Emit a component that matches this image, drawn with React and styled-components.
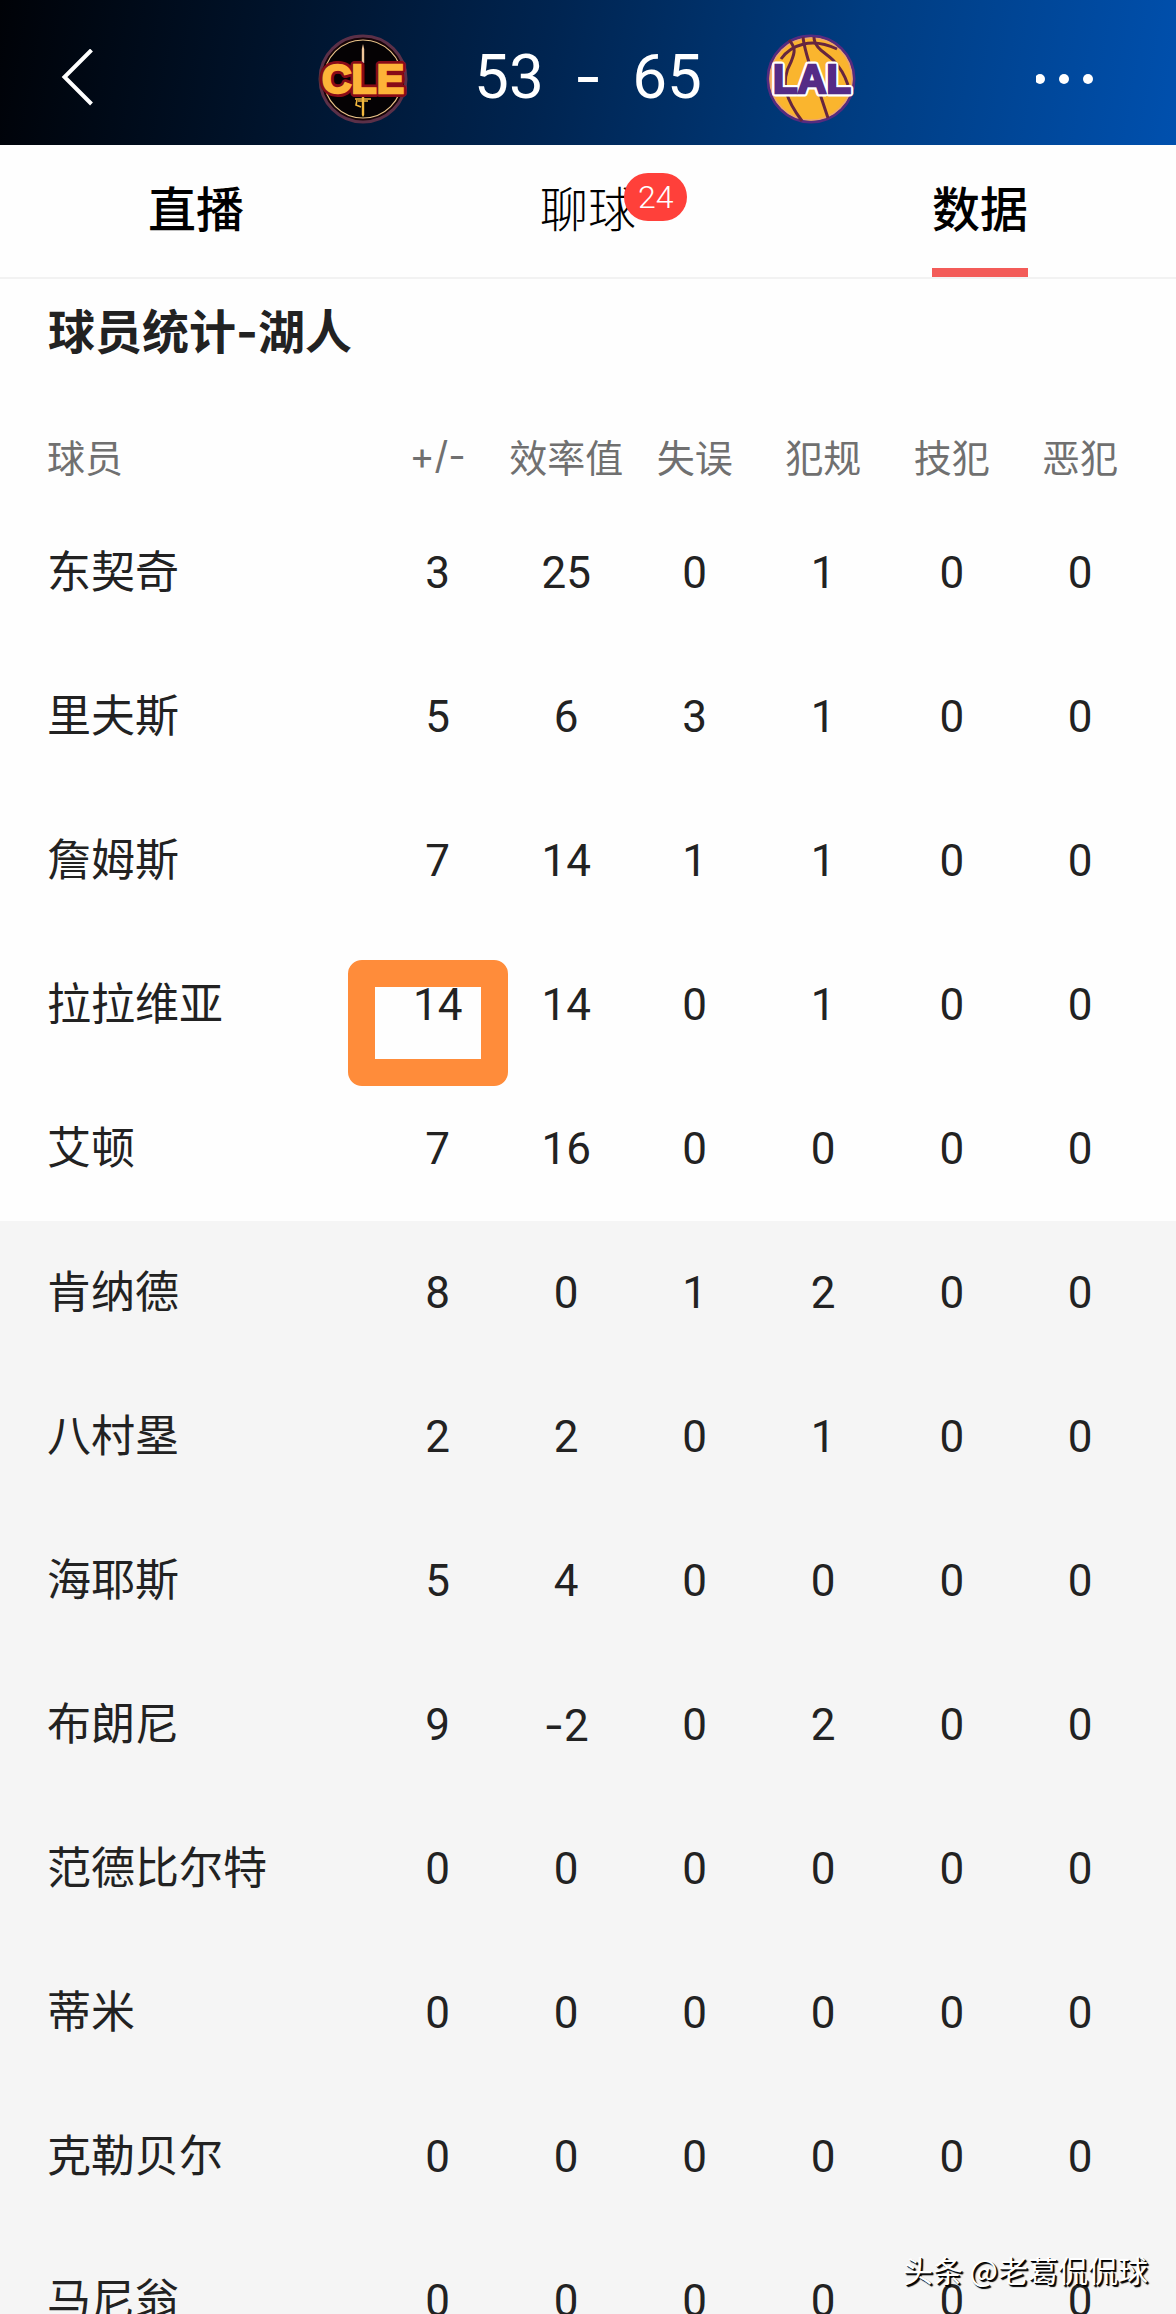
import React, { useState } from "react";
import styled, { createGlobalStyle } from "styled-components";

const columns = ["+/-", "效率值", "失误", "犯规", "技犯", "恶犯"]

const players = [
    { name: "东契奇", starter: true, stats: [3, 25, 0, 1, 0, 0] },
    { name: "里夫斯", starter: true, stats: [5, 6, 3, 1, 0, 0] },
    { name: "詹姆斯", starter: true, stats: [7, 14, 1, 1, 0, 0] },
    { name: "拉拉维亚", starter: true, stats: [14, 14, 0, 1, 0, 0], marked: 0 },
    { name: "艾顿", starter: true, stats: [7, 16, 0, 0, 0, 0] },
    { name: "肯纳德", starter: false, stats: [8, 0, 1, 2, 0, 0] },
    { name: "八村塁", starter: false, stats: [2, 2, 0, 1, 0, 0] },
    { name: "海耶斯", starter: false, stats: [5, 4, 0, 0, 0, 0] },
    { name: "布朗尼", starter: false, stats: [9, -2, 0, 2, 0, 0] },
    { name: "范德比尔特", starter: false, stats: [0, 0, 0, 0, 0, 0] },
    { name: "蒂米", starter: false, stats: [0, 0, 0, 0, 0, 0] },
    { name: "克勒贝尔", starter: false, stats: [0, 0, 0, 0, 0, 0] },
    { name: "马尼翁", starter: false, stats: [0, 0, 0, 0, 0, 0] }
]

const tabs = [
    { label: "直播", weight: 500 },
    { label: "聊球", weight: 300, count: 24 },
    { label: "数据", weight: 500 }
]

const GlobalStyle = createGlobalStyle`
    * {
        box-sizing: border-box;
    }

    body {
        margin: 0;
        background: #fefefe;
        color: #222;
        font-family: Roboto, "Noto Sans CJK SC", sans-serif;
    }

    button {
        border: 0;
        padding: 0;
        background: none;
        font: inherit;
        color: inherit;
        cursor: pointer;
    }
`

const Screen = styled.div`
    position: relative;
    height: 100vh;
    overflow: hidden;
`

const Header = styled.header`
    display: grid;
    grid-template-columns: 1fr auto 1fr;
    align-items: center;
    height: 145px;
    padding: 12px 56px 0;
    background: linear-gradient(100deg, #000207 0%, #001229 22%, #002450 46%, #003c80 72%, #0050ae 100%);
    color: #fff;
`

const IconButton = styled.button`
    display: flex;
    justify-self: ${props => props.$end ? "end" : "start"};
`

const Scoreboard = styled.div`
    display: flex;
    align-items: center;
    gap: 64px;

    svg {
        display: block;
    }
`

const Score = styled.div`
    display: flex;
    align-items: center;
    gap: 30px;
    font-size: 62px;
    font-weight: 400;
    line-height: 80px;
    padding-bottom: 4px;
`

const Sign = styled.span`
    font-family: Inter, "Noto Sans CJK SC", sans-serif;
`

const Tabs = styled.nav`
    display: grid;
    grid-template-columns: repeat(3, 1fr);
    justify-items: center;
    height: 134px;
    border-bottom: 2px solid #f2f2f2;
    color: #000;
`

const Tab = styled.button`
    position: relative;
    height: 100%;
    padding-top: 8px;
    border-bottom: 9px solid ${props => props.$active ? "#f35b58" : "transparent"};
    font-size: 48px;
    font-weight: ${props => props.$weight};
    line-height: 72px;
`

const Badge = styled.span`
    position: absolute;
    top: 28px;
    left: 84px;
    height: 48px;
    padding: 0 14px;
    border-radius: 24px;
    background: #ff403a;
    color: #fff;
    font-size: 32px;
    font-weight: 300;
    line-height: 48px;
`

const Title = styled.h2`
    margin: 0 48px;
    font-family: Inter, "Noto Sans CJK SC", sans-serif;
    font-size: 47px;
    font-weight: 700;
    line-height: 106px;
`

const StatsTable = styled.table`
    width: 100%;
    margin-top: 24px;
    table-layout: fixed;
    border-collapse: collapse;

    th, td {
        padding: 0;
        font-weight: 400;
        text-align: center;
        white-space: nowrap;
    }

    th:first-child {
        width: 31.75%;
        padding-left: 47px;
        text-align: left;
    }

    th:last-child, td:last-child {
        padding-right: 32px;
    }
`

const HeadCell = styled.th`
    width: 10.93%;
    height: 92px;
    color: #707070;
    font-family: Inter, "Noto Sans CJK SC", sans-serif;
    font-size: 38px;

    &:last-child {
        width: auto;
    }
`

const PlayerRow = styled.tr`
    height: 144px;
    background: ${props => props.$starter ? "#fefefe" : "#f5f5f5"};
    font-size: 44px;
    line-height: 64px;
`

const StatCell = styled.td`
    position: relative;
`

const Marker = styled.span`
    position: absolute;
    top: 27px;
    left: -25px;
    width: 160px;
    height: 126px;
    border: 27px solid #ff8c3a;
    border-radius: 14px;
`

const Watermark = styled.div`
    position: absolute;
    right: 28px;
    bottom: 23px;
    color: #fff;
    font-family: "Noto Sans CJK SC", sans-serif;
    font-size: 30px;
    line-height: 44px;
    text-shadow: 1px 1px 0 #000, 2px 2px 1px #000;
`

const BackIcon = () => (
    <svg width="42" height="60" viewBox="0 0 42 60" fill="none" stroke="#fff" strokeWidth="4">
        <path d="M35.5 1 L8.5 28 L35.5 55" />
    </svg>
)

const MoreIcon = () => (
    <svg width="84" height="12" viewBox="0 0 84 12" fill="#fff">
        <circle cx="4" cy="6" r="5" />
        <circle cx="28" cy="6" r="5" />
        <circle cx="52" cy="6" r="5" />
    </svg>
)

const CavsLogo = () => (
    <svg width="92" height="92" viewBox="0 0 92 92">
        <circle cx="45" cy="46" r="43" fill="#160307" stroke="#5b3048" strokeWidth="3" />
        <circle cx="45" cy="46" r="39" fill="#050204" stroke="#e9c48a" strokeWidth="1.2" />
        <path d="M45 11 L43.8 16 V30 H46.2 V16 Z" fill="#f0c69a" />
        <path d="M43.8 63 H46.2 V82 L45 84 L43.8 82 Z" fill="#f3b83e" />
        <path d="M37 66 H53 M40 68 H50 M39 67 L38 72 L43 74" fill="none" stroke="#f3b83e" strokeWidth="1.6" />
        <text x="45" y="60" textAnchor="middle" fontFamily="Liberation Sans, Arial, sans-serif" fontWeight="700" fontSize="41" fill="#870b17" stroke="#870b17" strokeWidth="8" strokeLinejoin="round">CLE</text>
        <text x="45" y="60" textAnchor="middle" fontFamily="Liberation Sans, Arial, sans-serif" fontWeight="700" fontSize="41" fill="#fdb338" stroke="#fdb338" strokeWidth="2.4">CLE</text>
    </svg>
)

const LakersLogo = () => (
    <svg width="92" height="92" viewBox="0 0 92 92">
        <circle cx="45" cy="46" r="43" fill="#fab52e" stroke="#552b7f" strokeWidth="3" />
        <circle cx="45" cy="46" r="41" fill="none" stroke="#eda66e" strokeWidth="1.6" />
        <g fill="none" stroke="#66263f" strokeWidth="3">
            <path d="M15 26 C25 12 45 4 71 16" />
            <path d="M23 7 C31 16 28 21 25 29 C13 50 21 68 36 88" />
            <path d="M37 4 C39 22 46 38 53 58 L62 85" />
            <path d="M48 4 C48 15 60 20 67 27 C74 34 79 43 82 52" />
        </g>
        <text x="46" y="60" textAnchor="middle" fontFamily="Liberation Sans, Arial, sans-serif" fontWeight="700" fontSize="40" fill="#fff" stroke="#fff" strokeWidth="7" strokeLinejoin="round">LAL</text>
        <text x="46" y="60" textAnchor="middle" fontFamily="Liberation Sans, Arial, sans-serif" fontWeight="700" fontSize="40" fill="#552b86" stroke="#552b86" strokeWidth="2.4">LAL</text>
    </svg>
)

const Player = ({ name, starter, stats, marked }) => {
    return (
        <PlayerRow $starter={ starter }>
            <th scope="row">{ name }</th>
            {
                stats.map((value, index) => (
                    <StatCell key={ index }>
                        { marked === index ? <Marker /> : "" }
                        { value < 0 ? <Sign>-</Sign> : "" }
                        { Math.abs(value) }
                    </StatCell>
                ))
            }
        </PlayerRow>
    )
}

const App = () => {
    const [activeTab, setActiveTab] = useState("数据")

    return (
        <Screen>
            <GlobalStyle />
            <Header>
                <IconButton aria-label="返回"><BackIcon /></IconButton>
                <Scoreboard>
                    <CavsLogo />
                    <Score>
                        <span>53</span>
                        <Sign>-</Sign>
                        <span>65</span>
                    </Score>
                    <LakersLogo />
                </Scoreboard>
                <IconButton $end aria-label="更多"><MoreIcon /></IconButton>
            </Header>
            <Tabs>
                {
                    tabs.map((tab) => (
                        <Tab key={ tab.label } $weight={ tab.weight } $active={ tab.label === activeTab } onClick={ () => { setActiveTab(tab.label) } }>
                            { tab.label }
                            { tab.count ? <Badge>{ tab.count }</Badge> : "" }
                        </Tab>
                    ))
                }
            </Tabs>
            <main>
                <Title>球员统计-湖人</Title>
                <StatsTable>
                    <thead>
                        <tr>
                            <HeadCell scope="col">球员</HeadCell>
                            { columns.map((column) => <HeadCell key={ column } scope="col">{ column }</HeadCell>) }
                        </tr>
                    </thead>
                    <tbody>
                        { players.map((player) => <Player key={ player.name } { ...player } />) }
                    </tbody>
                </StatsTable>
            </main>
            <Watermark>头条 @老葛侃侃球</Watermark>
        </Screen>
    )
}

export default App
